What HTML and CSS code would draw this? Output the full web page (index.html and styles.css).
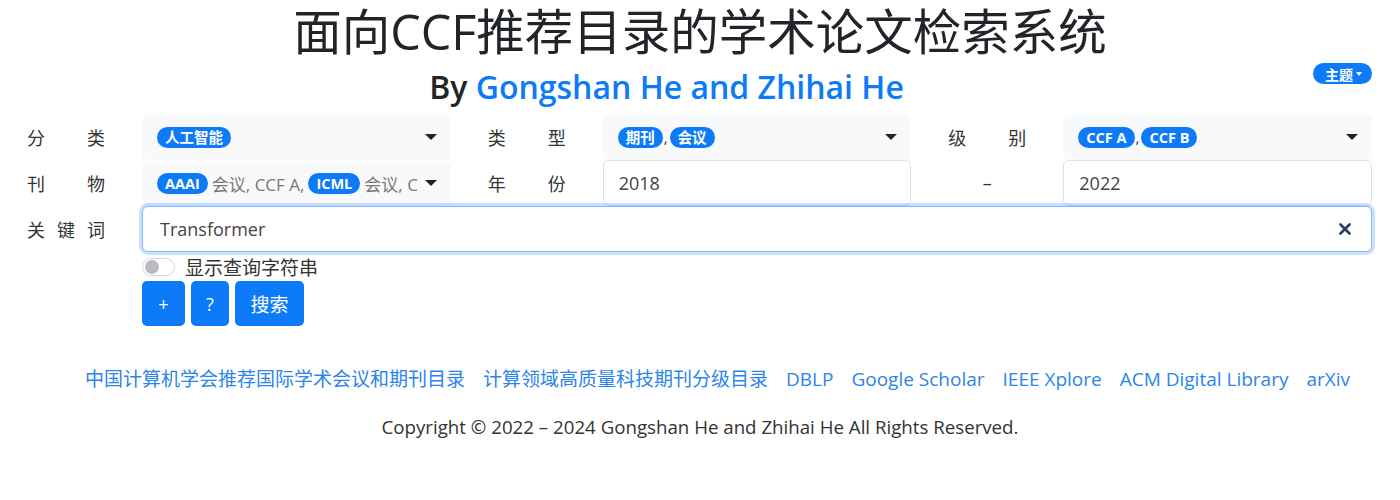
FILE: index.html
```html
<!DOCTYPE html>
<html lang="zh">
<head>
<meta charset="utf-8">
<title>面向CCF推荐目录的学术论文检索系统</title>
<link rel="stylesheet" href="styles.css">
</head>
<body>
<header class="header">
  <h1 class="title">面向CCF推荐目录的学术论文检索系统</h1>
  <div class="subrow">
    <div class="subtitle">By <a href="#" class="authors">Gongshan He and Zhihai He</a></div>
    <div class="theme-wrap"><button class="theme-btn">主题<span class="mini-caret"></span></button></div>
  </div>
</header>

<main class="form">
  <div class="grid3">
    <div class="group">
      <label class="lbl">分类</label>
      <div class="select"><div class="sel-content"><span class="chip">人工智能</span></div><span class="caret"></span></div>
    </div>
    <div class="group">
      <label class="lbl">类型</label>
      <div class="select"><div class="sel-content"><span class="chip">期刊</span><span class="comma">,</span><span class="chip">会议</span></div><span class="caret"></span></div>
    </div>
    <div class="group">
      <label class="lbl">级别</label>
      <div class="select"><div class="sel-content"><span class="chip">CCF A</span><span class="comma">,</span><span class="chip">CCF B</span></div><span class="caret"></span></div>
    </div>

    <div class="group">
      <label class="lbl">刊物</label>
      <div class="select"><div class="sel-content"><span class="chip">AAAI</span><span class="muted">会议, CCF A,</span><span class="chip">ICML</span><span class="muted">会议, C</span></div><span class="caret"></span></div>
    </div>
    <div class="group">
      <label class="lbl">年份</label>
      <input class="input" type="text" value="2018">
    </div>
    <div class="group">
      <label class="lbl dash">–</label>
      <input class="input" type="text" value="2022">
    </div>
  </div>

  <div class="group keyword">
    <label class="lbl">关键词</label>
    <div class="kw-box">
      <input class="kw-input" type="text" value="Transformer">
      <svg class="clear" width="12" height="12" viewBox="0 0 12 12"><path d="M1.5 1.5 L10.5 10.5 M10.5 1.5 L1.5 10.5" stroke="#2c3e5f" stroke-width="2.6" stroke-linecap="round"/></svg>
    </div>
  </div>

  <div class="actions">
    <label class="switch-row"><span class="switch"><span class="knob"></span></span>显示查询字符串</label>
    <div class="buttons">
      <button class="btn btn-plus">+</button>
      <button class="btn btn-help">?</button>
      <button class="btn btn-search">搜索</button>
    </div>
  </div>
</main>

<footer class="footer">
  <nav class="links">
    <a href="#">中国计算机学会推荐国际学术会议和期刊目录</a>
    <a href="#">计算领域高质量科技期刊分级目录</a>
    <a href="#">DBLP</a>
    <a href="#">Google Scholar</a>
    <a href="#">IEEE Xplore</a>
    <a href="#">ACM Digital Library</a>
    <a href="#">arXiv</a>
  </nav>
  <p class="copyright">Copyright © 2022 – 2024 Gongshan He and Zhihai He All Rights Reserved.</p>
</footer>
</body>
</html>
```

FILE: styles.css
```css
* { box-sizing: border-box; }
body {
  margin: 0;
  font-family: "Open Sans", "Noto Sans CJK SC", sans-serif;
  color: #212529;
  background: #fff;
}
a { text-decoration: none; }

.title {
  margin: 0;
  padding-top: 2px;
  text-align: center;
  font-size: 48.5px;
  font-weight: 400;
  line-height: 58px;
  color: #212529;
}
.subrow {
  display: grid;
  grid-template-columns: minmax(0, 1fr) auto;
  align-items: center;
  padding: 0 28px 0 20px;
  height: 53px;
}
.subtitle {
  text-align: center;
  font-size: 32px;
  font-weight: 600;
  line-height: 40px;
}
.authors { color: #0d7bf7; }
.theme-wrap {
  display: flex;
  justify-content: flex-end;
  align-self: start;
  padding-top: 3px;
}
.theme-btn {
  border: none;
  background: #0d7bf7;
  color: #fff;
  font-family: inherit;
  font-weight: 700;
  font-size: 14px;
  height: 21px;
  padding: 0 10px 0 12px;
  border-radius: 11px;
  display: flex;
  align-items: center;
  gap: 3px;
}
.mini-caret {
  width: 0; height: 0;
  border-left: 3.5px solid transparent;
  border-right: 3.5px solid transparent;
  border-top: 4px solid #fff;
}

.form {
  padding: 1px 28px 0 20px;
}
.grid3 {
  display: grid;
  grid-template-columns: repeat(3, minmax(0, 1fr));
  column-gap: 30px;
}
.group {
  display: flex;
  align-items: center;
  height: 46px;
}
.lbl {
  display: block;
  width: 122px;
  flex: none;
  padding-left: 7px;
  padding-right: 37px;
  font-size: 18px;
  color: #333;
  text-align: justify;
  text-align-last: justify;
}
.lbl.dash { text-align: center; text-align-last: center; }

.select {
  flex: 1;
  min-width: 0;
  height: 45px;
  background: #f8f9fa;
  border-radius: 6px;
  display: flex;
  align-items: center;
  padding: 0 14px 0 15px;
}
.sel-content {
  flex: 1;
  min-width: 0;
  overflow: hidden;
  white-space: nowrap;
  display: flex;
  align-items: center;
}
.chip {
  flex: none;
  background: #0d7bf7;
  color: #fff;
  font-weight: 700;
  font-size: 14.5px;
  line-height: 21px;
  height: 21px;
  padding: 0 8px;
  border-radius: 11px;
}
.comma { font-size: 15px; color: #333; margin: 0 2px 0 1px; }
.muted { color: #777; font-size: 17px; margin: 0 4px; flex: none; }
.caret {
  flex: none;
  width: 0; height: 0;
  border-left: 6px solid transparent;
  border-right: 6px solid transparent;
  border-top: 6px solid #222;
  margin-left: 2px;
}
.input {
  flex: 1;
  min-width: 0;
  height: 46px;
  border: 1px solid #dee2e6;
  border-radius: 6px;
  padding: 0 15px;
  font-family: inherit;
  font-size: 18px;
  color: #444;
  background: #fff;
}
.kw-box {
  flex: 1;
  height: 46px;
  border: 1px solid #86b7fe;
  border-radius: 6px;
  box-shadow: 0 0 0 3px rgba(13, 110, 253, 0.22);
  display: flex;
  align-items: center;
  padding: 0 20px 0 15px;
  background: #fff;
}
.kw-input {
  flex: 1;
  border: none;
  outline: none;
  font-family: inherit;
  font-size: 18px;
  color: #444;
  background: transparent;
}
.clear { flex: none; }

.actions {
  padding-left: 122px;
  padding-top: 3px;
}
.switch-row {
  display: flex;
  align-items: center;
  gap: 10px;
  font-size: 19px;
  color: #333;
  height: 24px;
}
.switch {
  width: 33px;
  height: 18px;
  border: 1px solid #d6d9dc;
  border-radius: 9px;
  display: flex;
  align-items: center;
  padding-left: 2px;
}
.knob {
  width: 14px;
  height: 14px;
  border-radius: 50%;
  background: #b8bcc2;
}
.buttons {
  display: flex;
  gap: 6px;
  margin-top: 2px;
}
.btn {
  border: none;
  background: #0d7bf7;
  color: #fff;
  height: 45px;
  border-radius: 5px;
  font-family: inherit;
  font-size: 18px;
  padding: 0;
}
.btn-plus { width: 43px; }
.btn-help { width: 38px; }
.btn-search { width: 69px; font-size: 19px; }

.footer {
  margin-top: 40px;
  text-align: center;
}
.links {
  display: flex;
  justify-content: center;
  gap: 18px;
  padding-left: 35px;
  font-size: 19px;
  line-height: 26px;
}
.links a { color: #2b85ea; }
.copyright {
  margin: 22px 0 0;
  font-size: 18.7px;
  color: #333;
}
```
